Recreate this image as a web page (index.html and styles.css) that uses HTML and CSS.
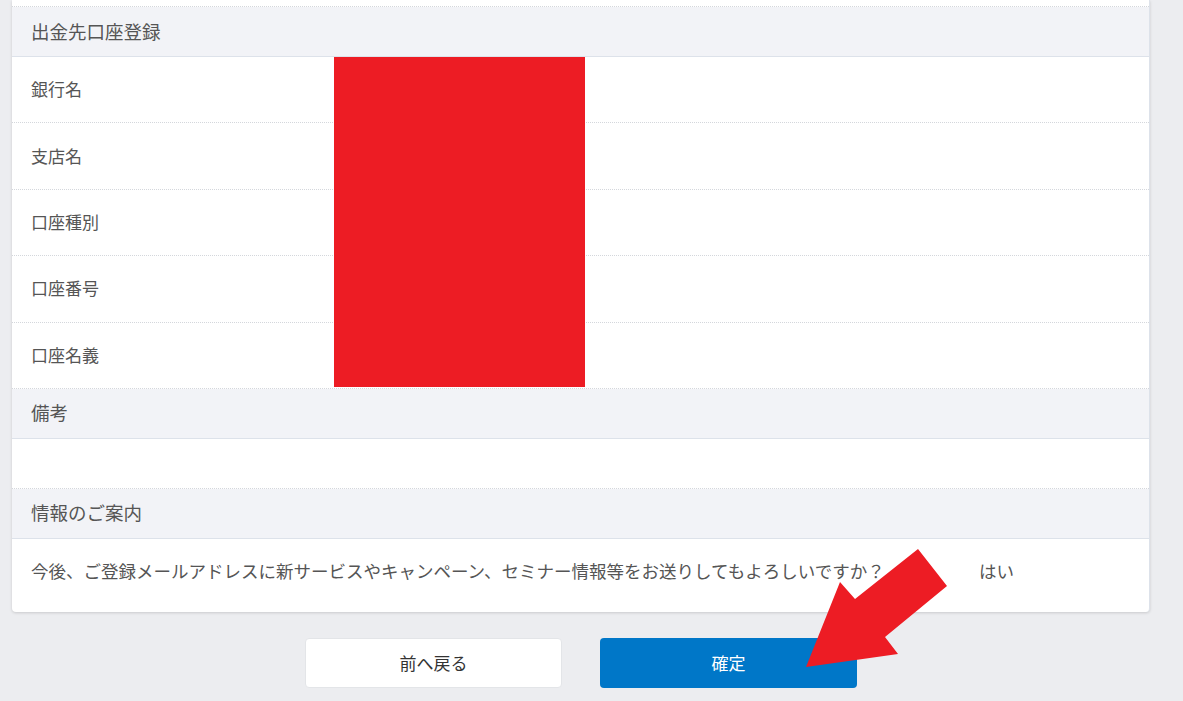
FILE: index.html
```html
<!DOCTYPE html>
<html lang="ja">
<head>
    <meta charset="UTF-8">
    <meta name="viewport" content="width=device-width, initial-scale=1.0">
    <title>出金先口座登録</title>
    <link rel="stylesheet" href="styles.css">
</head>
<body>
    <div class="page">
        <div class="card">
            <div class="row cut"></div>
            <div class="section">出金先口座登録</div>
            <div class="fields">
                <div class="row item">銀行名</div>
                <div class="row item">支店名</div>
                <div class="row item">口座種別</div>
                <div class="row item">口座番号</div>
                <div class="row item">口座名義</div>
                <div class="mask"></div>
            </div>
            <div class="section">備考</div>
            <div class="row empty"></div>
            <div class="section">情報のご案内</div>
            <div class="row question">
                <span>今後、ご登録メールアドレスに新サービスやキャンペーン、セミナー情報等をお送りしてもよろしいですか？</span>
                <span>はい</span>
            </div>
        </div>
        <div class="actions">
            <button type="button" class="btn back">前へ戻る</button>
            <button type="button" class="btn submit">確定</button>
        </div>
        <svg class="arrow" width="1183" height="701" viewBox="0 0 1183 701">
            <polygon points="806,667 840,582 855,599 918,549 947,586 885,637 898,654" fill="#ed1c24"/>
        </svg>
    </div>
</body>
</html>
```

FILE: styles.css
```css
body {
    margin: 0;
    background: #ecedf0;
    font-family: "Noto Sans CJK JP", "Noto Sans", sans-serif;
    color: #555;
    font-size: 17.5px;
}
.page {
    position: relative;
    height: 701px;
    overflow: hidden;
}
.card {
    margin-left: 12px;
    width: 1137px;
    background: #fff;
    border-right: 1px solid #dde2ea;
    border-radius: 0 0 4px 4px;
    box-shadow: 0 1px 3px rgba(0, 0, 0, 0.15);
}
.row {
    box-sizing: border-box;
    border-bottom: 1px dotted #d4d7dc;
}
.cut {
    height: 7px;
}
.section {
    box-sizing: border-box;
    height: 50px;
    padding: 0 0 2px 19px;
    display: flex;
    align-items: center;
    font-size: 18.5px;
    background: #f2f3f7;
    border-bottom: 1px solid #dde2ea;
}
.fields {
    position: relative;
}
.item {
    height: 66.4px;
    padding: 0 0 2px 19px;
    display: flex;
    align-items: center;
    font-size: 17px;
}
.mask {
    position: absolute;
    left: 322px;
    top: 0;
    width: 251px;
    height: 330px;
    background: #ed1c24;
}
.empty {
    height: 50px;
}
.question {
    display: grid;
    grid-template-columns: 948px 1fr;
    padding: 19px 0 30px 19px;
    height: 73px;
    border-bottom: none;
}
.actions {
    display: flex;
    justify-content: center;
    gap: 38px;
    width: 1162px;
    margin-top: 26px;
}
.btn {
    width: 257px;
    height: 50px;
    border-radius: 4px;
    font-family: inherit;
    font-size: 17px;
    cursor: pointer;
}
.back {
    background: #fff;
    border: 1px solid #e3e5e8;
    color: #333;
}
.submit {
    background: #0077c8;
    border: none;
    color: #fff;
}
.arrow {
    position: absolute;
    left: 0;
    top: 0;
}
```
